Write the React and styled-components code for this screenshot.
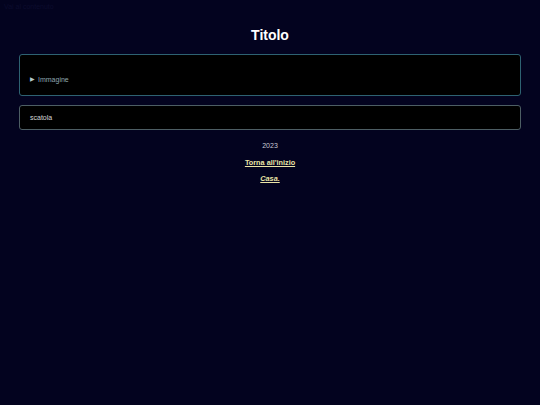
import React from "react";
import styled, { createGlobalStyle } from "styled-components";

const GlobalStyle = createGlobalStyle`
  html, body {
    margin: 0;
    padding: 0;
    background: #03031f;
  }
  body {
    font-family: "Liberation Sans", Arial, sans-serif;
    color: #d8d8e0;
  }
`;

const Page = styled.div`
  min-height: 405px;
  background: #03031f;
  display: flex;
  flex-direction: column;
  padding: 0 19px 0 19px;
  box-sizing: border-box;
  position: relative;
`;

const SkipLink = styled.a`
  position: absolute;
  left: 4px;
  top: 2px;
  font-size: 7px;
  line-height: 9px;
  color: #0c0c2e;
  text-decoration: none;
`;

const Title = styled.h1`
  margin: 27px 0 0 0;
  font-size: 14px;
  line-height: 16px;
  font-weight: 700;
  color: #ffffff;
  text-align: center;
`;

const Panel = styled.section`
  background: #000000;
  border: 1px solid ${(p) => p.$border};
  border-radius: 3px;
  box-sizing: border-box;
  height: ${(p) => p.$height}px;
  margin-top: ${(p) => p.$top}px;
  padding: 0 10px;
  display: flex;
  align-items: ${(p) => p.$align};
  font-size: 7px;
  line-height: 9px;
`;

const Summary = styled.div`
  display: flex;
  align-items: center;
  gap: 3px;
  color: #8fa7b0;
  padding-bottom: 11px;
`;

const Marker = styled.span`
  font-size: 5.5px;
  line-height: 9px;
  color: #b4c8cf;
`;

const BoxText = styled.span`
  color: #d6d6d6;
`;

const Footer = styled.footer`
  margin-top: 11px;
  display: flex;
  flex-direction: column;
  align-items: center;
  gap: 7.5px;
  font-size: 7px;
  line-height: 9px;
`;

const Year = styled.p`
  margin: 0;
  color: #c8c8d2;
`;

const FootLink = styled.a`
  color: #ebe5a6;
  font-size: 7.3px;
  font-weight: 700;
  font-style: ${(p) => (p.$italic ? "italic" : "normal")};
  text-decoration: underline;
  text-underline-offset: 1px;
`;

export default function App() {
  return (
    <>
      <GlobalStyle />
      <Page>
        <SkipLink href="#contenuto">Vai al contenuto</SkipLink>
        <Title>Titolo</Title>
        <Panel $border="#2e6272" $height={42} $top={11} $align="flex-end">
          <Summary>
            <Marker>▶</Marker>
            <span>Immagine</span>
          </Summary>
        </Panel>
        <Panel $border="#4d5e64" $height={25} $top={9} $align="center">
          <BoxText>scatola</BoxText>
        </Panel>
        <Footer>
          <Year>2023</Year>
          <FootLink href="#top">Torna all'inizio</FootLink>
          <FootLink href="#casa" $italic>
            Casa.
          </FootLink>
        </Footer>
      </Page>
    </>
  );
}
